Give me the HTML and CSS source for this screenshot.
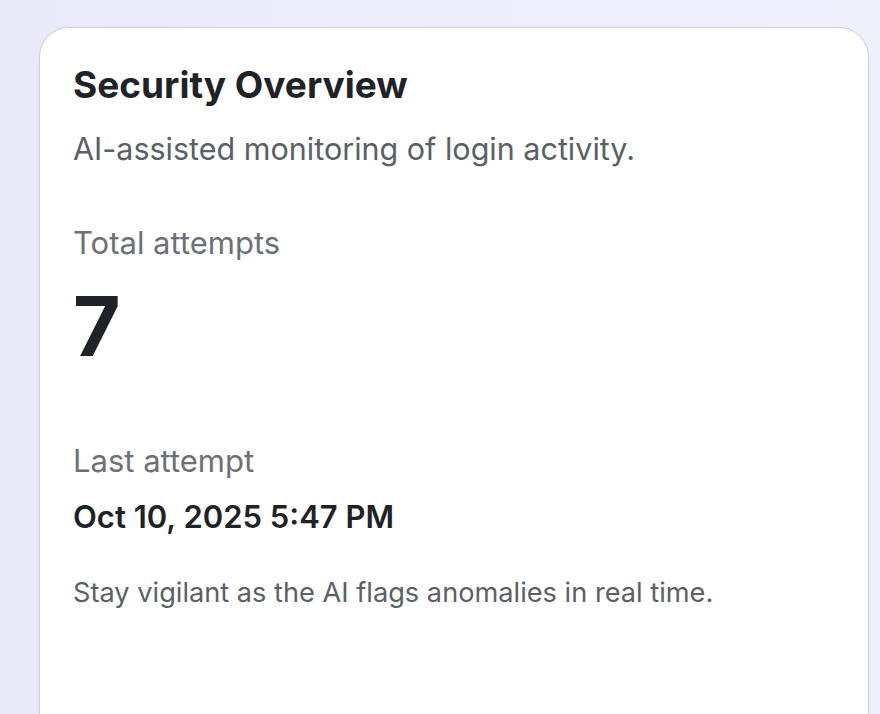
FILE: index.html
```html
<!DOCTYPE html>
<html lang="en">
<head>
<meta charset="utf-8">
<title>Security Overview</title>
<link rel="stylesheet" href="styles.css">
</head>
<body>
<main class="page">
  <section class="card">
    <h1 class="title">Security Overview</h1>
    <p class="subtitle">AI-assisted monitoring of login activity.</p>
    <div class="stat">
      <div class="stat-label">Total attempts</div>
      <div class="stat-value">7</div>
    </div>
    <div class="stat stat-last">
      <div class="stat-label">Last attempt</div>
      <div class="stat-date">Oct 10, 2025 5:47 PM</div>
    </div>
    <p class="note">Stay vigilant as the AI flags anomalies in real time.</p>
  </section>
</main>
</body>
</html>
```
FILE: styles.css
```css
html, body {
  margin: 0;
  padding: 0;
  height: 100%;
  overflow: hidden;
}
body {
  background: linear-gradient(90deg, #e9e9fa 0%, #ededfc 50%, #f0f0fd 100%);
  font-family: Inter, "Noto Sans", "Liberation Sans", sans-serif;
  color: #1f2227;
}
.page {
  padding: 27px 11px 0 39px;
}
.card {
  box-sizing: border-box;
  width: 830px;
  height: 760px;
  background: #ffffff;
  border: 1.5px solid #cfcfd5;
  border-radius: 30px;
  padding: 34.5px 33px 0 33px;
  display: flex;
  flex-direction: column;
  box-shadow: 0 1px 3px rgba(30, 30, 60, 0.06);
}
.title {
  margin: 0;
  font-size: 37px;
  font-weight: 700;
  line-height: 44px;
  color: #1f2227;
}
.subtitle {
  margin: 22px 0 0;
  font-size: 30.5px;
  line-height: 40px;
  color: #5b5f66;
}
.stat {
  margin-top: 54px;
  display: flex;
  flex-direction: column;
}
.stat-label {
  font-size: 31px;
  line-height: 40px;
  color: #6b7079;
}
.stat-value {
  margin-top: 23px;
  font-size: 82px;
  font-weight: 700;
  line-height: 82px;
  color: #1f2227;
}
.stat-last {
  margin-top: 73px;
}
.stat-date {
  margin-top: 16px;
  font-size: 31px;
  font-weight: 600;
  line-height: 40px;
  color: #1f2227;
}
.note {
  margin: 38px 0 0;
  font-size: 27.2px;
  line-height: 36px;
  color: #5b5f66;
}
```
